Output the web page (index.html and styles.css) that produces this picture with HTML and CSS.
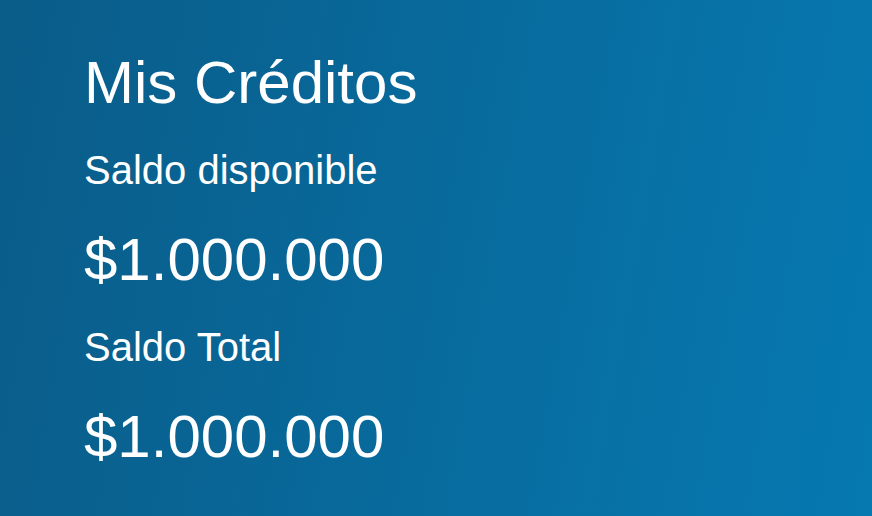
FILE: index.html
```html
<!DOCTYPE html>
<html lang="es">
  <head>
    <meta charset="UTF-8" />
    <meta name="viewport" content="width=device-width, initial-scale=1.0" />
    <title>Mis Créditos</title>
    <link rel="stylesheet" href="styles.css">
  </head>
  <body>
    <div id="credits">
      <h1 class="title">Mis Créditos</h1>
      <div class="label">Saldo disponible</div>
      <div class="amount">$1.000.000</div>
      <div class="label">Saldo Total</div>
      <div class="amount">$1.000.000</div>
    </div>
  </body>
</html>
```

FILE: styles.css
```css
body {
  min-height: 100vh;
  margin: 0;
  font-family: "Liberation Sans", Arial, sans-serif;
  color: #fff;
  background: linear-gradient(100deg, #0a5c88 0%, #0679b1 100%);
}

#credits {
  display: flex;
  flex-direction: column;
  align-items: flex-start;
  padding: 48px 84px 0;
}

.title {
  margin: 0 0 31px;
  font-size: 60px;
  font-weight: normal;
  line-height: normal;
}

.label {
  margin-bottom: 32px;
  font-size: 40px;
}

.amount {
  margin-bottom: 31px;
  font-size: 60px;
}

.amount:last-child {
  margin-bottom: 0;
}
```
